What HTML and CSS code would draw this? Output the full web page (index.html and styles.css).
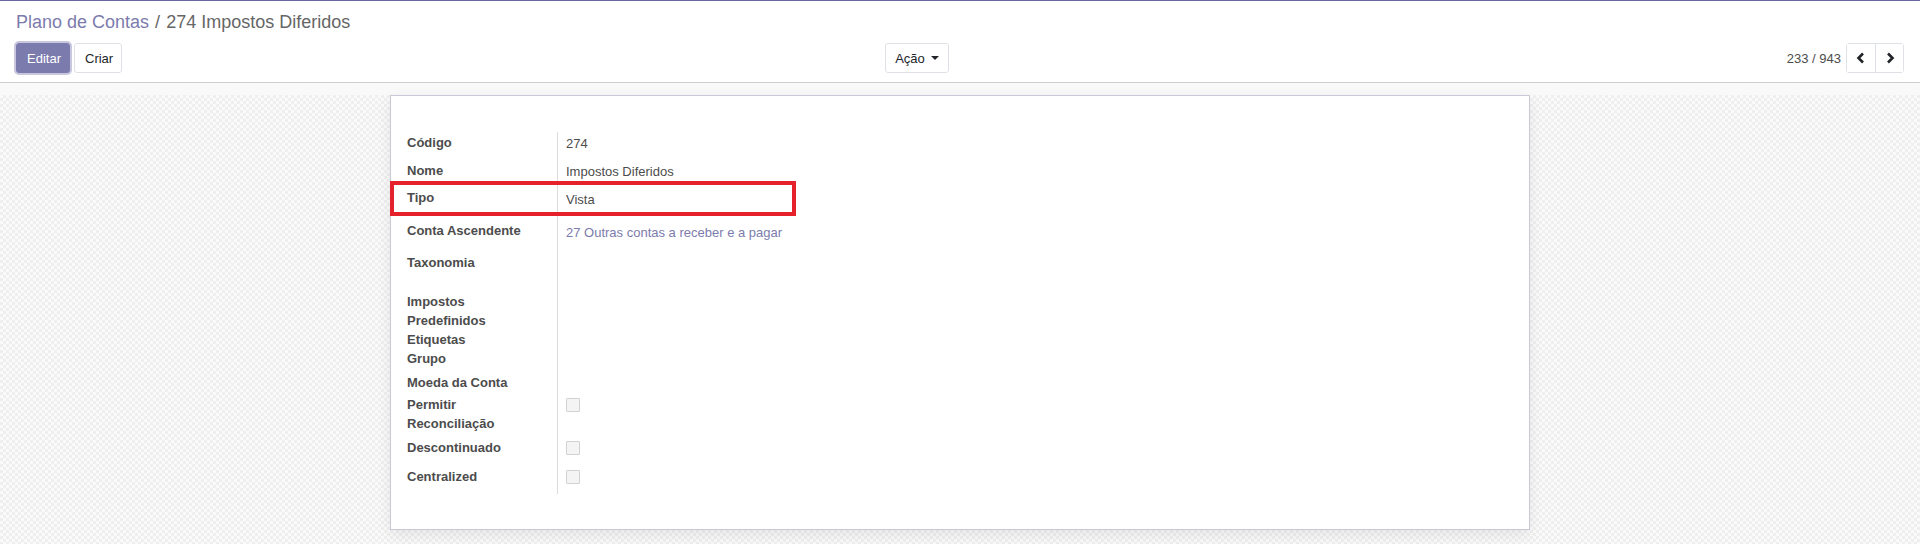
FILE: index.html
```html
<!DOCTYPE html>
<html lang="pt">
<head>
    <meta charset="UTF-8">
    <title>Plano de Contas - 274 Impostos Diferidos</title>
    <link rel="stylesheet" href="styles.css">
</head>
<body>
    <div class="control-panel">
        <div class="breadcrumb">
            <a href="#" class="crumb-link">Plano de Contas</a>
            <span class="crumb-sep">/</span>
            <span class="crumb-active">274 Impostos Diferidos</span>
        </div>
        <div class="cp-bottom">
            <div class="cp-left">
                <button class="btn btn-primary">Editar</button>
                <button class="btn btn-secondary">Criar</button>
                <button class="btn btn-secondary btn-action">Ação <span class="caret"></span></button>
            </div>
            <div class="cp-right">
                <span class="pager-value">233 / 943</span>
                <div class="pager-group">
                    <button class="pager-btn">
                        <svg width="10" height="12" viewBox="0 0 10 12"><path d="M7 1.5 L2.5 6 L7 10.5" fill="none" stroke="#212529" stroke-width="2.6"/></svg>
                    </button>
                    <button class="pager-btn">
                        <svg width="10" height="12" viewBox="0 0 10 12"><path d="M3 1.5 L7.5 6 L3 10.5" fill="none" stroke="#212529" stroke-width="2.6"/></svg>
                    </button>
                </div>
            </div>
        </div>
    </div>

    <div class="sheet-bg">
        <div class="sheet">
            <div class="highlight"></div>
            <div class="fields">
                <div class="field row-codigo">
                    <div class="label">Código</div>
                    <div class="value">274</div>
                </div>
                <div class="field row-nome">
                    <div class="label">Nome</div>
                    <div class="value">Impostos Diferidos</div>
                </div>
                <div class="field row-tipo">
                    <div class="label">Tipo</div>
                    <div class="value">Vista</div>
                </div>
                <div class="field row-conta">
                    <div class="label">Conta Ascendente</div>
                    <div class="value"><a href="#" class="link">27 Outras contas a receber e a pagar</a></div>
                </div>
                <div class="field row-taxonomia">
                    <div class="label">Taxonomia</div>
                    <div class="value"></div>
                </div>
                <div class="field row-impostos">
                    <div class="label">Impostos<br>Predefinidos</div>
                    <div class="value"></div>
                </div>
                <div class="field row-etiquetas">
                    <div class="label">Etiquetas</div>
                    <div class="value"></div>
                </div>
                <div class="field row-grupo">
                    <div class="label">Grupo</div>
                    <div class="value"></div>
                </div>
                <div class="field row-moeda">
                    <div class="label">Moeda da Conta</div>
                    <div class="value"></div>
                </div>
                <div class="field row-permitir">
                    <div class="label">Permitir<br>Reconciliação</div>
                    <div class="value"><span class="checkbox"></span></div>
                </div>
                <div class="field row-descont">
                    <div class="label">Descontinuado</div>
                    <div class="value"><span class="checkbox"></span></div>
                </div>
                <div class="field row-central">
                    <div class="label">Centralized</div>
                    <div class="value"><span class="checkbox"></span></div>
                </div>
            </div>
        </div>
    </div>
</body>
</html>
```

FILE: styles.css
```css
html, body {
    height: 100%;
}

body {
    margin: 0;
    font-family: "Liberation Sans", Arial, sans-serif;
    font-size: 13px;
    color: #4c4c4c;
    border-top: 1px solid #6a66a0;
    display: flex;
    flex-direction: column;
    box-sizing: border-box;
}

.control-panel {
    background: #fff;
    padding: 9px 16px 9px;
    border-bottom: 1px solid #cfcfcf;
}

.breadcrumb {
    font-size: 18px;
    line-height: 24px;
    height: 24px;
}

.crumb-link {
    color: #7c7bad;
    text-decoration: none;
}

.crumb-sep {
    color: #666;
    margin: 0 1px;
}

.crumb-active {
    color: #666;
}

.cp-bottom {
    display: flex;
    margin-top: 9px;
    height: 30px;
}

.cp-left {
    flex: 0 0 50%;
    display: flex;
    align-items: center;
}

.cp-right {
    flex: 1;
    display: flex;
    justify-content: flex-end;
    align-items: center;
}

.btn {
    font-family: inherit;
    font-size: 13px;
    height: 30px;
    padding: 0 10px;
    border-radius: 3px;
    cursor: pointer;
    margin-right: 4px;
}

.btn-primary {
    background: #7c7bad;
    color: #fff;
    border: 1px solid #7c7bad;
    box-shadow: 0 0 0 2px #c8c7dd;
    width: 54px;
}

.btn-secondary {
    background: #fff;
    color: #212529;
    border: 1px solid #dee2e6;
    width: 48px;
}

.btn-action {
    width: 64px;
    margin-left: auto;
    margin-right: 11px;
    display: flex;
    align-items: center;
    justify-content: center;
}

.caret {
    display: inline-block;
    margin-left: 6px;
    border-top: 4px solid #212529;
    border-left: 4px solid transparent;
    border-right: 4px solid transparent;
}

.pager-value {
    color: #4c4c4c;
    margin-right: 5px;
}

.pager-group {
    display: flex;
    border: 1px solid #dee2e6;
    border-radius: 3px;
    height: 30px;
    box-sizing: border-box;
}

.pager-btn {
    width: 28px;
    background: #fff;
    border: none;
    padding: 0;
    display: flex;
    align-items: center;
    justify-content: center;
    cursor: pointer;
}

.pager-btn + .pager-btn {
    border-left: 1px solid #dee2e6;
}

.sheet-bg {
    flex: 1;
    padding-top: 12px;
    background-color: #f8f8f8;
    background-image:
        linear-gradient(#f9f9f9, #f9f9f9),
        conic-gradient(#efefef 25%, #fafafa 0 50%, #efefef 0 75%, #fafafa 0);
    background-size: 100% 12px, 6px 6px;
    background-repeat: no-repeat, repeat;
}

.sheet {
    position: relative;
    width: 1140px;
    height: 435px;
    margin: 0 auto;
    box-sizing: border-box;
    background: #fff;
    border: 1px solid #c9c8d6;
    box-shadow: 0 5px 14px rgba(0, 0, 0, 0.08);
    padding: 37px 16px 0;
}

/* anotacao vermelha sobre a linha Tipo */
.highlight {
    position: absolute;
    left: -1px;
    top: 85px;
    width: 406px;
    height: 35px;
    box-sizing: border-box;
    border: 4px solid #e5212b;
}

.fields {
    display: flex;
    flex-direction: column;
    margin-top: -1px;
}

.field {
    display: flex;
    line-height: 19px;
}

.label {
    width: 151px;
    font-weight: bold;
    color: #4c4c4c;
    border-right: 1px solid #dcdcdc;
    padding-top: 1px;
    box-sizing: border-box;
}

.value {
    padding-left: 8px;
    padding-top: 2px;
    color: #4c4c4c;
}

.link {
    color: #7c7bad;
    text-decoration: none;
}

.row-codigo { height: 28px; }
.row-nome { height: 27px; }
.row-tipo { height: 33px; }
.row-conta { height: 32px; }
.row-taxonomia { height: 39px; }
.row-impostos { height: 38px; }
.row-etiquetas { height: 19px; }
.row-grupo { height: 24px; }
.row-moeda { height: 22px; }
.row-permitir { height: 43px; }
.row-descont { height: 29px; }
.row-central { height: 28px; }

.row-tipo .value,
.row-conta .value {
    padding-top: 3px;
}

.row-permitir .value,
.row-descont .value,
.row-central .value {
    padding-top: 0;
}

.checkbox {
    display: block;
    width: 14px;
    height: 14px;
    box-sizing: border-box;
    margin-top: 4px;
    border: 1px solid #d2d2d2;
    background: #f4f4f4;
    border-radius: 1px;
}
```
